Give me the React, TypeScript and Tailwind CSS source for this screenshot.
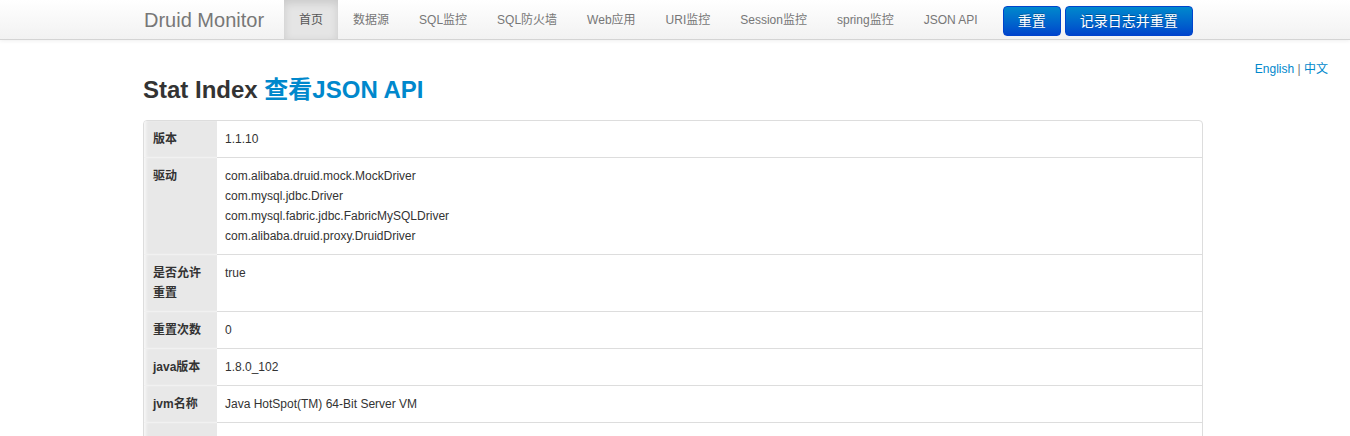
import React from "react";

const font = { fontFamily: '"Liberation Sans", Arial, "Noto Sans CJK SC", sans-serif' };

const navItems = ["首页", "数据源", "SQL监控", "SQL防火墙", "Web应用", "URI监控", "Session监控", "spring监控", "JSON API"];

// last row runs past the fold in the screenshot, so it stays empty
const rows: { label: string; values: string[] }[] = [
  { label: "版本", values: ["1.1.10"] },
  {
    label: "驱动",
    values: [
      "com.alibaba.druid.mock.MockDriver",
      "com.mysql.jdbc.Driver",
      "com.mysql.fabric.jdbc.FabricMySQLDriver",
      "com.alibaba.druid.proxy.DruidDriver",
    ],
  },
  { label: "是否允许重置", values: ["true"] },
  { label: "重置次数", values: ["0"] },
  { label: "java版本", values: ["1.8.0_102"] },
  { label: "jvm名称", values: ["Java HotSpot(TM) 64-Bit Server VM"] },
  { label: "\u00a0", values: ["\u00a0"] },
];

function Navbar() {
  return (
    <div className="h-[40px] bg-gradient-to-b from-white to-[#f2f2f2] border-b border-[#d4d4d4] shadow-[0_1px_4px_rgba(0,0,0,0.065)]">
      <div className="grid grid-cols-[143px_1060px_1fr] h-full">
        <div />
        <div className="flex items-start h-full">
          <span className="text-[20px] leading-[20px] pt-[10px] pr-[20px] pl-px text-[#777]">Druid Monitor</span>
          <ul className="flex h-full">
            {navItems.map((item, i) => (
              <li key={item}>
                <span
                  className={`block h-[39px] px-[15px] pt-[10px] text-[12px] leading-[20px] ${
                    i === 0
                      ? "bg-[#e5e5e5] text-[#555] shadow-[inset_0_3px_8px_rgba(0,0,0,0.125)]"
                      : "text-[#777]"
                  }`}
                >
                  {item}
                </span>
              </li>
            ))}
          </ul>
          <div className="flex gap-[4px] ml-[10px] mt-[6px]">
            {["重置", "记录日志并重置"].map((b) => (
              <button
                key={b}
                className="h-[30px] px-[14px] text-[14px] leading-[20px] text-white rounded-[4px] border border-[#0044cc] bg-gradient-to-b from-[#0088cc] to-[#0044cc] [text-shadow:0_-1px_0_rgba(0,0,0,0.25)]"
              >
                {b}
              </button>
            ))}
          </div>
        </div>
        <div />
      </div>
    </div>
  );
}

function StatTable() {
  return (
    <div className="border border-[#dddddd] rounded-[4px] overflow-hidden">
      {rows.map((r, i) => (
        <div key={i} className="flex">
          <div
            className={`w-[73px] shrink-0 px-[9px] py-[8px] bg-[#e8e8e8] shadow-[inset_3px_0_3px_-1px_#f7f7f7] font-bold text-[12px] leading-[20px] text-[#333] ${
              i > 0 ? "border-t border-[#f1f1f1]" : ""
            }`}
          >
            {r.label}
          </div>
          <div
            className={`flex-1 px-[8px] py-[8px] text-[12px] leading-[20px] text-[#333] ${
              i > 0 ? "border-t border-[#dddddd]" : ""
            }`}
          >
            {r.values.map((v, j) => (
              <div key={j}>{v}</div>
            ))}
          </div>
        </div>
      ))}
    </div>
  );
}

export default function App() {
  return (
    <div className="min-h-screen bg-white text-[#333]" style={font}>
      <Navbar />
      <div className="grid grid-cols-[143px_1060px_1fr]">
        <div />
        <div className="pt-[30px]">
          <h3 className="text-[24px] leading-[40px] font-bold mb-[10px] text-[#333]">
            Stat Index <span className="text-[#0088cc]">查看JSON API</span>
          </h3>
          <StatTable />
        </div>
        <div className="pt-[19px] pr-[22px] text-right text-[12px] leading-[20px]">
          <span className="text-[#0088cc]">English</span>
          <span className="text-[#777]"> | </span>
          <span className="text-[#0088cc]">中文</span>
        </div>
      </div>
    </div>
  );
}
